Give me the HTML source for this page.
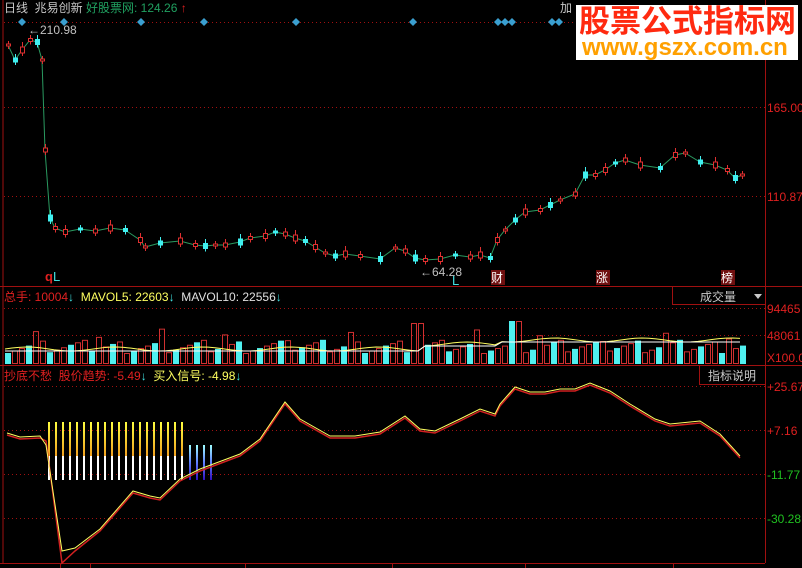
<!DOCTYPE html>
<html><head><meta charset="utf-8">
<style>
html,body{margin:0;padding:0;background:#000;width:802px;height:568px;overflow:hidden;font-family:"Liberation Sans","Noto Sans CJK SC",sans-serif;}
svg{position:absolute;left:0;top:0}
.t{position:absolute;font-size:12px;white-space:nowrap;line-height:14px}
</style></head><body>
<svg id="s" width="802" height="568" xmlns="http://www.w3.org/2000/svg">
<defs>
<linearGradient id="yg" x1="0" y1="0" x2="0" y2="1"><stop offset="0" stop-color="#ffff40"/><stop offset="1" stop-color="#f0a020"/></linearGradient>
<linearGradient id="bg" x1="0" y1="0" x2="0" y2="1"><stop offset="0" stop-color="#a0ffff"/><stop offset="0.5" stop-color="#6080ff"/><stop offset="1" stop-color="#3010c0"/></linearGradient>
</defs>
<g stroke="#a01010" fill="none">
<line x1="3" y1="0" x2="3" y2="563"/>
<line x1="765.5" y1="0" x2="765.5" y2="563"/>
<line x1="0" y1="286.5" x2="802" y2="286.5"/>
<line x1="0" y1="365.5" x2="802" y2="365.5"/>
<line x1="0" y1="563.5" x2="765" y2="563.5"/>
<line x1="672.5" y1="287" x2="672.5" y2="304"/><line x1="672" y1="304.5" x2="765" y2="304.5"/>
<line x1="699.5" y1="366" x2="699.5" y2="384"/><line x1="699" y1="384.5" x2="765" y2="384.5"/>
</g>
<g stroke="#a01010" stroke-dasharray="1,3">
<line x1="4" y1="22.5" x2="765" y2="22.5"/>
<line x1="4" y1="107.5" x2="765" y2="107.5"/>
<line x1="4" y1="196.5" x2="765" y2="196.5"/>
<line x1="4" y1="308.5" x2="765" y2="308.5"/>
<line x1="4" y1="335.5" x2="765" y2="335.5"/>
<line x1="4" y1="386.5" x2="765" y2="386.5"/>
<line x1="4" y1="430.5" x2="765" y2="430.5"/>
<line x1="4" y1="474.5" x2="765" y2="474.5"/>
<line x1="4" y1="518.5" x2="765" y2="518.5"/>
</g>
<g stroke="#a01010"><line x1="60.5" y1="563" x2="60.5" y2="568"/><line x1="90.5" y1="563" x2="90.5" y2="568"/><line x1="245.5" y1="563" x2="245.5" y2="568"/><line x1="392.5" y1="563" x2="392.5" y2="568"/><line x1="525.5" y1="563" x2="525.5" y2="568"/><line x1="673.5" y1="563" x2="673.5" y2="568"/></g>
<g id="dia" fill="#3a9fd0"></g>
<polyline id="price" fill="none" stroke="#2a9a60" stroke-width="1"/>
<g id="cand"></g>
<g id="vol"></g>
<polyline id="ma5" fill="none" stroke="#ffff60"/>
<polyline id="ma10" fill="none" stroke="#ffffff"/>
<g id="sig"></g>
<polyline id="ir" fill="none" stroke="#d02020" stroke-width="1.5"/>
<polyline id="iy" fill="none" stroke="#ffff60" stroke-width="1"/>
<g font-size="12" fill="#e02020" font-family="Liberation Sans">
<text x="767" y="112">165.00</text>
<text x="767" y="201">110.87</text>
<text x="767" y="313">94465</text>
<text x="767" y="340">48061</text>
<text x="767" y="362">X100.0</text>
<text x="767" y="391">+25.67</text>
<text x="767" y="435">+7.16</text>
<text x="767" y="479" fill="#20c020">-11.77</text>
<text x="767" y="523" fill="#20c020">-30.28</text>
</g>
<g font-size="12" fill="#c0c0c0"><text x="28" y="34">←210.98</text><text x="420" y="276">←64.28</text></g>
<text x="45" y="281" font-size="13" fill="#e02020" font-weight="bold">q</text><text x="53" y="281" font-size="13" fill="#40e0e0">L</text>
<text x="452" y="285" font-size="13" fill="#40e0e0">L</text>
<g font-size="12" fill="#fff" font-family="Liberation Sans,Noto Sans CJK SC,sans-serif">
<rect x="491" y="270" width="14" height="15" fill="#701010"/><text x="491" y="282">财</text>
<rect x="596" y="270" width="14" height="15" fill="#701010"/><text x="596" y="282">涨</text>
<rect x="721" y="270" width="14" height="15" fill="#701010"/><text x="721" y="282">榜</text>
</g>
</svg>
<div class="t" style="left:4px;top:1px;color:#c8c8c8">日线&nbsp; 兆易创新 <span style="color:#20a060">好股票网: 124.26</span> <span style="color:#e02020">↑</span></div>
<div class="t" style="left:560px;top:1px;color:#c8c8c8">加</div>
<div style="position:absolute;left:576px;top:5px;width:222px;height:55px;background:#fff;"></div>
<div class="t" style="left:579px;top:5px;font-size:31px;line-height:34px;font-weight:bold;color:#ff2a10">股票公式指标网</div>
<div class="t" style="left:582px;top:36px;font-size:24px;line-height:24px;font-weight:bold;color:#ffa000">www.gszx.com.cn</div>
<div class="t" style="left:4px;top:290px;color:#e02020">总手: 10004<span style="color:#40e0e0">↓</span> <span style="color:#ffff60">&nbsp;MAVOL5: 22603</span><span style="color:#40e0e0">↓</span> <span style="color:#e0e0e0">&nbsp;MAVOL10: 22556</span><span style="color:#40e0e0">↓</span></div>
<div class="t" style="left:700px;top:290px;color:#c8c8c8">成交量</div>
<div style="position:absolute;left:754px;top:294px;width:0;height:0;border-left:4px solid transparent;border-right:4px solid transparent;border-top:5px solid #c8c8c8"></div>
<div class="t" style="left:4px;top:369px;color:#e02020">抄底不愁&nbsp; 股价趋势: -5.49<span style="color:#40e0e0">↓</span> <span style="color:#ffff60">&nbsp;买入信号: -4.98</span><span style="color:#40e0e0">↓</span></div>
<div class="t" style="left:708px;top:369px;color:#c8c8c8">指标说明</div>
<script>
var NS="http://www.w3.org/2000/svg";
function el(p,t,a){var e=document.createElementNS(NS,t);for(var k in a)e.setAttribute(k,a[k]);document.getElementById(p).appendChild(e);return e;}
[22,64,141,204,296,413,498,505,512,552,559].forEach(function(x){el("dia","polygon",{points:(x)+",18 "+(x+4)+",22 "+x+",26 "+(x-4)+",22"});});
var P=[[8,45],[15,60],[22,50],[30,40],[37,42],[42,60],[45,150],[50,218],[55,228],[65,232],[80,229],[95,231],[110,228],[125,230],[140,240],[145,247],[160,243],[180,241],[195,245],[205,246],[215,245],[225,245],[240,242],[250,238],[265,236],[275,232],[285,234],[295,238],[305,241],[315,247],[325,253],[335,256],[345,254],[360,256],[380,259],[395,248],[405,251],[415,258],[425,260],[440,259],[455,255],[470,257],[480,255],[490,258],[497,240],[505,230],[515,220],[525,212],[540,210],[550,205],[560,200],[575,194],[585,175],[595,175],[605,170],[615,163],[625,160],[640,165],[660,168],[675,155],[685,153],[700,162],[715,165],[727,170],[735,178],[742,175]];
document.getElementById("price").setAttribute("points",P.map(function(p){return p.join(",")}).join(" "));
P.forEach(function(p,i){var up=i%3!=1;var h=2+(i*7%5);var c=up?"#e03030":"#40f0f0";
el("cand","line",{x1:p[0]+.5,y1:p[1]-h-2,x2:p[0]+.5,y2:p[1]+h/2+3,stroke:c});
el("cand","rect",{x:p[0]-1.5,y:p[1]-h/2,width:4,height:h,fill:up?"#000":c,stroke:c});});
var m5=[],m10=[];
for(var x=5,i=0;x<745;x+=7,i++){var r=((i*37)%17)/17;var h=10+r*14;if(i%9==4)h+=12;if(x>505&&x<520)h=42;if(x>410&&x<425)h=40;var up=(i*5)%3!=0;var c=up?"#d03030":"#50f0f0";
el("vol","rect",{x:x+.5,y:363-h+.5,width:5,height:h,fill:up?"none":c,stroke:c});
var b=x>500?22:(x>420?18:13);m5.push(x+","+(362-b-Math.sin(i/2)*2));m10.push(x+","+(362-b+2));}
document.getElementById("ma5").setAttribute("points",m5.join(" "));
document.getElementById("ma10").setAttribute("points",m10.join(" "));
for(var x=48;x<=182;x+=7){el("sig","rect",{x:x,y:422,width:2,height:34,fill:"url(#yg)"});el("sig","rect",{x:x,y:456,width:2,height:24,fill:"#fff"});}
[189,196,203,210].forEach(function(x){el("sig","rect",{x:x,y:445,width:2,height:35,fill:"url(#bg)"});});
var I=[[7,434],[20,438],[40,437],[46,440],[62,562],[75,550],[100,530],[133,492],[150,497],[160,499],[180,480],[200,470],[240,455],[260,440],[285,403],[300,420],[330,437],[355,437],[380,433],[405,417],[420,430],[435,432],[460,420],[480,410],[495,415],[500,405],[515,388],[530,393],[545,393],[560,390],[575,390],[590,384],[610,392],[630,405],[655,420],[670,425],[700,422],[720,435],[740,457]];
document.getElementById("ir").setAttribute("points",I.map(function(p){return p[0]+","+(p[1]+1)}).join(" "));
document.getElementById("iy").setAttribute("points",I.map(function(p,i){var y=p[1]-1;if(p[0]==62)y=551;if(p[0]==75)y=548;if(p[0]==46)y=445;return p[0]+","+y}).join(" "));
</script>
</body></html>
